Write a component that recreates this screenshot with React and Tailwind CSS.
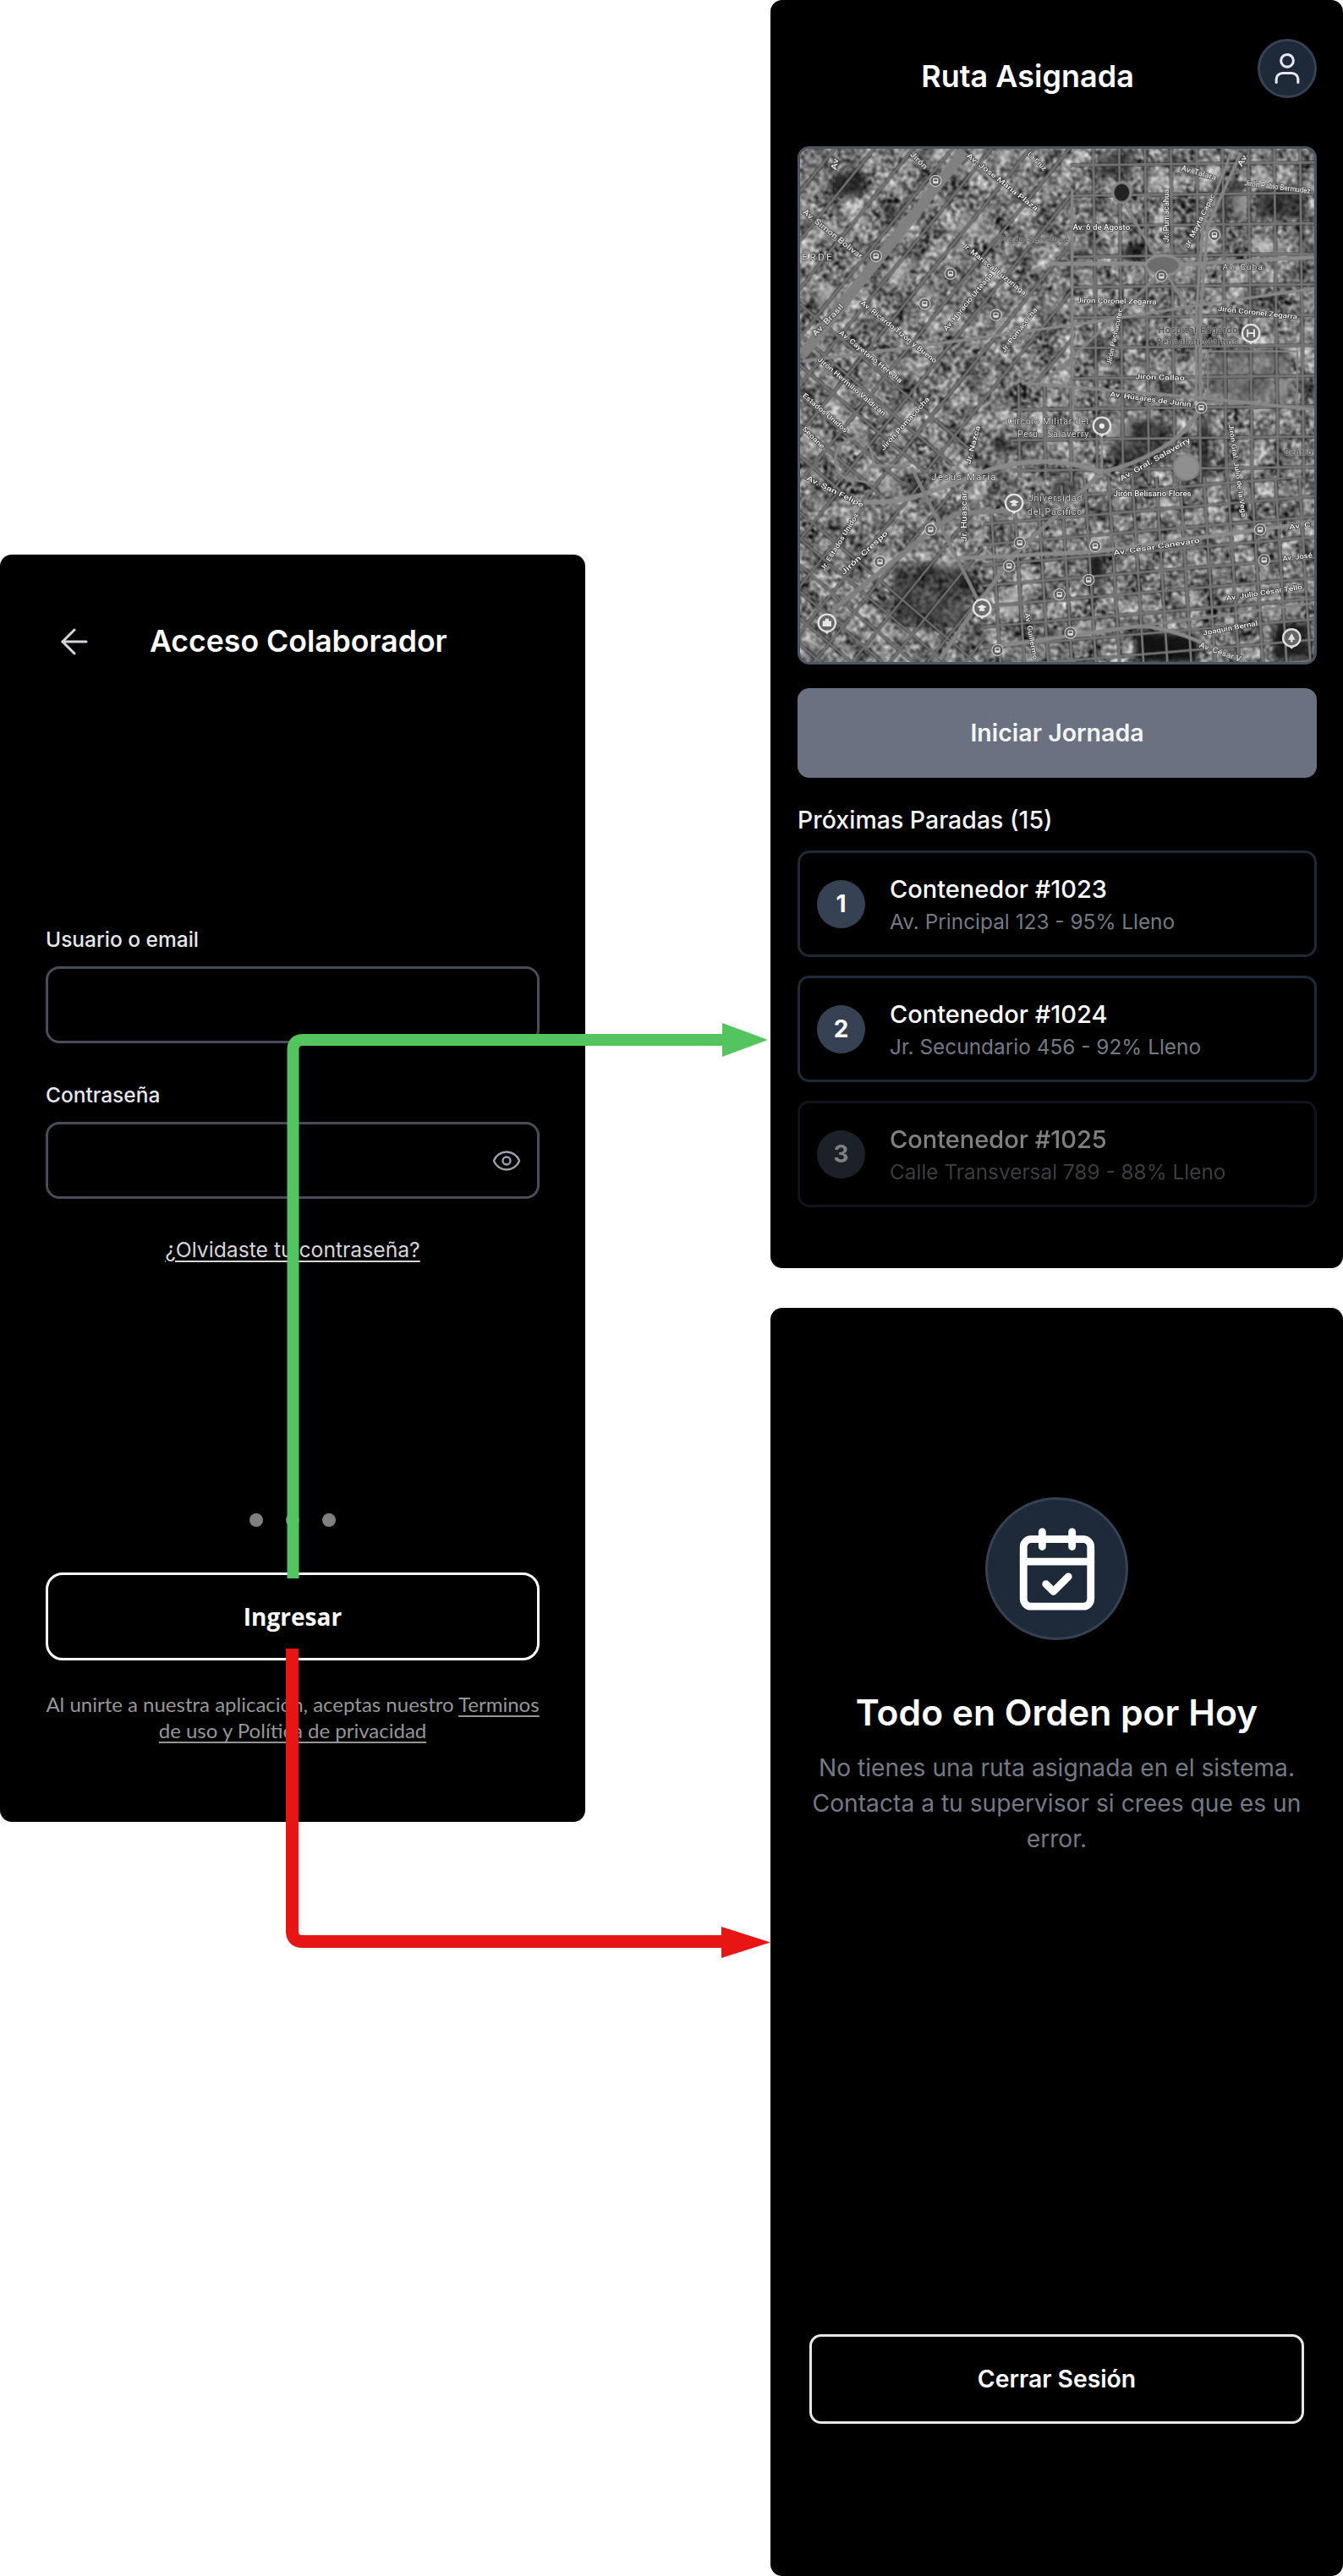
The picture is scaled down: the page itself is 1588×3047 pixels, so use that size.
import { ArrowLeft, CalendarCheck, Eye, User } from 'lucide-react';

const stops = [
  { id: 1, name: 'Contenedor #1023', detail: 'Av. Principal 123 - 95% Lleno' },
  { id: 2, name: 'Contenedor #1024', detail: 'Jr. Secundario 456 - 92% Lleno' },
  { id: 3, name: 'Contenedor #1025', detail: 'Calle Transversal 789 - 88% Lleno', faded: true },
];

// Calles del mapa, en coordenadas del recorte (1568 unidades de lado)
function family(x0, y0, dx, dy, stepX, stepY, count, len = 2400) {
  let d = '';
  for (let i = 0; i < count; i++) {
    const x = x0 + stepX * i;
    const y = y0 + stepY * i;
    d += `M${x} ${y}L${x + dx * len} ${y + dy * len}`;
  }
  return d;
}

const darkPatches = [
  [110, 80, 90, 70, 0.75], [260, 170, 50, 60, 0.6], [900, 20, 110, 70, 0.5], [950, 830, 170, 130, 0.6],
  [1260, 110, 90, 110, 0.55], [1390, 120, 150, 100, 0.6], [1020, 1470, 190, 90, 0.95], [1440, 1440, 110, 110, 0.85],
  [880, 1235, 45, 80, 0.85], [290, 1260, 220, 190, 0.55], [1215, 830, 30, 180, 0.7], [830, 310, 50, 30, 0.7],
  [985, 300, 60, 40, 0.8], [1100, 700, 40, 60, 0.6], [590, 880, 50, 50, 0.7], [770, 1010, 80, 50, 0.5],
  [20, 1510, 50, 50, 0.5], [1250, 610, 240, 25, 0.6], [1240, 700, 190, 50, 0.35], [880, 590, 40, 60, 0.6],
  [500, 1290, 40, 60, 0.7], [140, 960, 50, 30, 0.3], [345, 990, 40, 60, 0.7],
];

const lightPatches = [
  [495, 205, 70, 60], [270, 345, 70, 50], [945, 835, 60, 50], [1460, 1370, 55, 40], [1320, 140, 45, 60],
  [610, 1330, 60, 90], [240, 990, 70, 60], [60, 420, 60, 60], [1040, 1090, 30, 30], [1390, 280, 50, 50],
];

const roads = [
  ['M505 15L15 630', 32, '#808080'],
  ['M760 355H1060M1150 358L1560 335', 12, '#8a8a8a'],
  ['M1340 20L1240 240L1218 500V770', 10, '#868686'],
  ['M1310 20L1225 240L1205 500V770', 8, '#868686'],
  ['M15 650L400 600L900 530L1215 480L1560 430', 9, '#888888'],
  ['M680 715L1215 760L1560 795', 10, '#888888'],
  ['M1215 790C1180 880 1060 950 920 985L650 1240L520 1420L430 1550', 13, '#848484'],
  ['M200 1075C330 1080 380 1050 500 1010C620 950 780 930 920 985', 14, '#8a8a8a'],
  ['M480 1245L900 1225L1568 1135', 12, '#8a8a8a'],
  ['M600 1510L1030 1450C1130 1450 1250 1510 1370 1568', 12, '#888888'],
  ['M1030 1450L1560 1380', 8, '#828282'],
  ['M110 1400L400 1165L480 1110L640 1100', 15, '#808080'],
  ['M345 970L545 1370', 11, '#808080'],
  ['M230 960C230 890 180 870 150 890C100 920 110 980 140 1000L230 1020', 8, '#868686'],
  ['M230 965H340', 8, '#868686'],
  ['M830 130V700M985 170L1100 360L1220 560', 9, '#848484'],
  ['M1090 390L850 620L760 700', 9, '#828282'],
  ['M820 700C840 720 835 790 830 800', 8, '#828282'],
  ['M920 870V985', 6, '#8c8c8c'],
  ['M1240 620H1510V790M1240 620V770', 6, '#828282'],
];

const labels = [
  ['Av. Brasil', 50, 570, 135, 480],
  ['Av. Simon Bolivar', 20, 195, 195, 335],
  ['Av. Jose Maria Plaza', 515, 25, 725, 190],
  ['Jr. Mariscal Luzuriaga', 500, 295, 690, 445],
  ['Av. Horacio Urteaga', 445, 555, 585, 385],
  ['Jr. Pumacahua', 1115, 290, 1115, 130],
  ['Jr. Mayta Capac', 1175, 305, 1255, 145],
  ['Av. Talara', 1160, 65, 1265, 95],
  ['Jirón Pablo Bermudez', 1350, 110, 1550, 135],
  ['Av. 6 de Agosto', 832, 245, 1005, 245],
  ['Jirón Coronel Zegarra', 845, 465, 1085, 470],
  ['Jirón Coronel Zegarra', 1270, 490, 1510, 515],
  ['Av. Ricardo Tizón y Bueno', 195, 470, 420, 650],
  ['Av. Cayetano Heredia', 130, 560, 315, 710],
  ['Jirón Hermilio Valdizan', 65, 640, 265, 810],
  ['Estados Unidos', 20, 750, 150, 860],
  ['Seoane', 20, 850, 80, 910],
  ['Jirón Pachacutec', 940, 660, 975, 490],
  ['Jr. Pomacocha', 620, 620, 720, 490],
  ['Jirón Callao', 1020, 695, 1170, 700],
  ['Av. Húsares de Junín', 945, 748, 1190, 780],
  ['Av. Gral. Salaverry', 975, 1005, 1185, 885],
  ['Av. San Felipe', 30, 1000, 200, 1085],
  ['Jirón Belisario Flores', 955, 1050, 1190, 1050],
  ['Jr. Huascar', 505, 1195, 505, 1045],
  ['Jr. Nazca', 515, 960, 545, 845],
  ['Jirón Pomacocha', 255, 915, 395, 760],
  ['Av. César Canevaro', 955, 1228, 1215, 1190],
  ['Av. Julio César Tello', 1295, 1365, 1525, 1330],
  ['Jirón Gral. Julio de la Vega', 1310, 840, 1350, 1120],
  ['Av. C', 1485, 1150, 1550, 1142],
  ['Av. José', 1465, 1245, 1555, 1235],
  ['Joaquín Bernal', 1225, 1470, 1390, 1440],
  ['Av. César V', 1215, 1505, 1340, 1550],
  ['Av. Guillermo', 695, 1410, 720, 1550],
  ['Jr. Estados Unidos', 75, 1280, 180, 1110],
  ['Jirón Crespo', 135, 1290, 270, 1165],
  ['Av.', 110, 72, 118, 30],
  ['Jirón', 345, 20, 390, 65],
  ['La Cruz', 700, 20, 750, 70],
  ['Av.', 1335, 60, 1355, 22],
];

const bigLabels = [
  ['ERDE', 15, 345, 90, 30, '#d8d8d8'],
  ['Jesús María', 405, 1010, 195, 29, '#dddddd'],
  ['Av. Cuba', 1285, 373, 120, 25, '#e0e0e0'],
  ['Plaza San José', 610, 288, 210, 25, '#4e4e4e'],
  ['Hospital Edgardo', 1090, 565, 240, 27, '#4a4a4a'],
  ['Rebagliati Martins', 1085, 600, 245, 27, '#4a4a4a'],
  ['Círculo Militar del', 635, 840, 245, 27, '#d0d0d0'],
  ['Perú - Salaverry', 665, 880, 215, 27, '#d0d0d0'],
  ['Universidad', 695, 1073, 165, 27, '#cfcfcf'],
  ['del Pacífico', 695, 1113, 165, 27, '#cfcfcf'],
  ['Centro', 1470, 933, 85, 25, '#4a4a4a'],
];

const transit = [
  [418, 105], [238, 332], [463, 385], [385, 476], [600, 510], [1260, 268], [1100, 392], [1220, 790], [403, 1158],
  [250, 1255], [672, 1198], [640, 1268], [900, 1208], [880, 1310], [792, 1354], [825, 1470], [605, 1522], [1398, 1158],
  [1410, 1250],
];

const pins = [
  [920, 845, 'dot'], [655, 1078, 'uni'], [558, 1395, 'uni'], [90, 1440, 'bag'], [1370, 565, 'H'], [1493, 1485, 'tree'],
];

function Streets({ clip, d, color, width }) {
  return (
    <g clipPath={clip}>
      <path d={d} stroke="#222222" strokeWidth={width + 7} opacity="0.4" />
      <path d={d} stroke={color} strokeWidth={width} />
    </g>
  );
}

function CityMap() {
  return (
    <svg viewBox="10 8 1550 1550" className="block w-full h-full" style={{ fontFamily: 'Roboto, sans-serif' }}>
      <defs>
        <filter id="grano" x="0" y="0" width="100%" height="100%" colorInterpolationFilters="sRGB">
          <feTurbulence type="fractalNoise" baseFrequency="0.075" numOctaves="3" seed="7" result="fino" />
          <feTurbulence type="fractalNoise" baseFrequency="0.014" numOctaves="2" seed="21" result="ancho" />
          <feComposite in="fino" in2="ancho" operator="arithmetic" k1="0" k2="0.8" k3="0.55" k4="-0.14" />
          <feColorMatrix type="matrix" values="1.4 0 0 0 -0.02  1.4 0 0 0 -0.02  1.4 0 0 0 -0.02  0 0 0 0 1" />
          <feGaussianBlur stdDeviation="2.2" />
        </filter>
        <filter id="suave"><feGaussianBlur stdDeviation="1.2" /></filter>
        <filter id="sombra"><feGaussianBlur stdDeviation="9" /></filter>
        <clipPath id="zona-diagonal">
          <path d="M0 0H840V720H650L500 960L340 1000L200 1070L0 1000Z" />
        </clipPath>
        <clipPath id="zona-recta">
          <path d="M825 0H1568V1020H880L650 1000L650 720H825Z" />
        </clipPath>
        <clipPath id="zona-baja">
          <path d="M560 1568V1100L880 1000L1568 1000V1568Z" />
        </clipPath>
        <clipPath id="zona-suroeste">
          <path d="M0 1000L200 1070L340 1000L500 960L560 1100V1568H0Z" />
        </clipPath>
      </defs>
      <rect x="0" y="0" width="1568" height="1568" filter="url(#grano)" />
      <g filter="url(#sombra)">
        {darkPatches.map(([x, y, w, h, o], i) => (
          <rect key={i} x={x} y={y} width={w} height={h} rx="12" fill="#111111" opacity={o} />
        ))}
        {lightPatches.map(([x, y, w, h], i) => (
          <rect key={i} x={x} y={y} width={w} height={h} rx="8" fill="#c8c8c8" opacity="0.5" />
        ))}
        <rect x="1250" y="630" width="240" height="150" fill="#777777" opacity="0.6" />
      </g>
      <g filter="url(#suave)" fill="none">
        <Streets
          clip="url(#zona-diagonal)"
          color="#707070"
          width={7}
          d={family(-900, -300, 0.76, 0.65, 0, 92, 26) + family(120, 0, -0.63, 0.78, 118, 0, 14)}
        />
        <Streets
          clip="url(#zona-recta)"
          color="#747474"
          width={7}
          d={family(650, 60, 1, -0.012, 0, 92, 11) + family(660, 0, 0.012, 1, 78, 0, 12)}
        />
        <Streets
          clip="url(#zona-baja)"
          color="#747474"
          width={7}
          d={family(560, 1080, 1, -0.085, 0, 62, 10) + family(580, 1000, 0.06, 1, 72, 0, 14)}
        />
        <Streets
          clip="url(#zona-suroeste)"
          color="#707070"
          width={6}
          d={family(-700, 500, 0.76, 0.65, 0, 80, 16) + family(200, 950, -0.63, 0.78, 90, 30, 9)}
        />
        {roads.map(([d, w, c], i) => (
          <path key={i} d={d} stroke={c} strokeWidth={w} strokeLinejoin="round" />
        ))}
        <ellipse cx="980" cy="140" rx="27" ry="30" fill="#222222" stroke="#848484" strokeWidth="8" />
        <ellipse cx="1105" cy="360" rx="52" ry="30" fill="#6d6d6d" stroke="#8c8c8c" strokeWidth="9" />
        <circle cx="1175" cy="970" r="38" fill="#8f8f8f" stroke="#848484" strokeWidth="6" />
      </g>
      <g filter="url(#suave)" opacity="0.95">
        {transit.map(([x, y], i) => (
          <g key={i}>
            <circle cx={x} cy={y} r="17" fill="#5e5e5e" stroke="#c9c9c9" strokeWidth="3" />
            <rect x={x - 8} y={y - 8} width="16" height="16" rx="3" fill="#e3e3e3" />
            <rect x={x - 5} y={y - 5} width="10" height="6" fill="#5e5e5e" />
          </g>
        ))}
        {pins.map(([x, y, kind], i) => (
          <g key={i}>
            <path d={`M${x - 21} ${y + 14}L${x} ${y + 34}L${x + 21} ${y + 14}Z`} fill="#e8e8e8" />
            <circle cx={x} cy={y} r="26" fill="#6b6b6b" stroke="#e6e6e6" strokeWidth="6" />
            {kind === 'dot' && <circle cx={x} cy={y} r="8" fill="#f2f2f2" />}
            {kind === 'uni' && <path d={`M${x - 15} ${y - 3}L${x} ${y - 10}L${x + 15} ${y - 3}L${x} ${y + 4}ZM${x - 8} ${y + 3}H${x + 8}V${y + 9}H${x - 8}Z`} fill="#eeeeee" />}
            {kind === 'bag' && <path d={`M${x - 13} ${y - 6}H${x + 13}V${y + 11}H${x - 13}ZM${x - 5} ${y - 13}H${x + 5}V${y - 6}H${x - 5}Z`} fill="#eeeeee" />}
            {kind === 'tree' && <path d={`M${x} ${y - 13}L${x + 11} ${y + 6}H${x + 3}V${y + 13}H${x - 3}V${y + 6}H${x - 11}Z`} fill="#eeeeee" />}
            {kind === 'H' && <path d={`M${x - 10} ${y - 12}V${y + 12}M${x + 10} ${y - 12}V${y + 12}M${x - 10} ${y}H${x + 10}`} stroke="#eeeeee" strokeWidth="5" />}
          </g>
        ))}
      </g>
      <g>
        {labels.map(([t, x1, y1, x2, y2], i) => {
          const angle = (Math.atan2(y2 - y1, x2 - x1) * 180) / Math.PI;
          const len = Math.hypot(x2 - x1, y2 - y1);
          return (
            <text
              key={i}
              transform={`translate(${(x1 + x2) / 2} ${(y1 + y2) / 2}) rotate(${angle})`}
              textAnchor="middle"
              dominantBaseline="central"
              textLength={len}
              lengthAdjust="spacingAndGlyphs"
              fontSize="21"
              fontWeight="500"
              fill="#f0f0f0"
              stroke="#3c3c3c"
              strokeWidth="3.5"
              paintOrder="stroke"
            >
              {t}
            </text>
          );
        })}
        {bigLabels.map(([t, x, y, len, size, c], i) => (
          <text
            key={i}
            x={x}
            y={y}
            textLength={len}
            lengthAdjust="spacing"
            fontSize={size}
            fill={c}
            stroke={c === '#4e4e4e' || c === '#4a4a4a' ? '#9a9a9a' : '#3c3c3c'}
            strokeWidth="3"
            paintOrder="stroke"
          >
            {t}
          </text>
        ))}
      </g>
    </svg>
  );
}

function LoginPanel() {
  return (
    <section className="w-[692px] h-[1499px] mt-[656px] bg-black rounded-[14px] px-[54px] flex flex-col font-['Inter',sans-serif]">
      <header className="flex items-center h-[54px] mt-[76px] gap-[65px] pl-[10px]">
        <ArrowLeft size={48} strokeWidth={1.5} className="text-gray-300" />
        <h1 className="text-[35.6px] leading-[54px] font-semibold text-white">Acceso Colaborador</h1>
      </header>

      <label className="mt-[307px] text-[24.5px] leading-[36px] font-medium text-gray-200">Usuario o email</label>
      <div className="mt-[14px] h-[91px] rounded-[16px] border-[3px] border-[#464e5b]" />

      <label className="mt-[43px] text-[24.5px] leading-[36px] font-medium text-gray-200">Contraseña</label>
      <div className="mt-[14px] h-[91px] rounded-[16px] border-[3px] border-[#464e5b] flex items-center justify-end pr-[18px]">
        <Eye size={36} strokeWidth={1.6} className="text-gray-400" />
      </div>

      <a className="mt-[42px] self-center text-[24.7px] leading-[36px] text-[#d6d6d6] underline underline-offset-4">¿Olvidaste tu contraseña?</a>

      <div className="mt-[294px] flex justify-center gap-[27px]">
        <span className="w-[16px] h-[16px] rounded-full bg-[#808080]" />
        <span className="w-[16px] h-[16px] rounded-full bg-[#808080]" />
        <span className="w-[16px] h-[16px] rounded-full bg-[#808080]" />
      </div>

      <button className="mt-[54px] h-[104px] rounded-[20px] border-[3px] border-white text-[28px] font-bold text-white font-['Open_Sans',sans-serif]">
        Ingresar
      </button>

      <p className="mt-[36px] -mx-[4px] text-center text-[24px] leading-[31px] text-[#969696] font-['Lato',sans-serif]">
        <span>Al unirte a nuestra aplicación, aceptas nuestro </span>
        <a className="underline underline-offset-4">Terminos</a>
        <br />
        <a className="underline underline-offset-4">de uso y Política de privacidad</a>
      </p>
    </section>
  );
}

function RoutePanel() {
  return (
    <section className="h-[1500px] bg-black rounded-[14px] pl-[32px] pr-[31px] flex flex-col font-['Inter',sans-serif]">
      <header className="mt-[46px] h-[70px] flex items-center">
        <h2 className="flex-1 pt-[18px] text-center text-[36px] leading-[52px] font-semibold text-white">Ruta Asignada</h2>
        <div className="w-[70px] h-[70px] rounded-full bg-gray-800 border-[3px] border-gray-700 flex items-center justify-center">
          <User size={44} strokeWidth={1.7} className="text-gray-200" />
        </div>
      </header>

      <div className="mt-[57px] w-full h-[613px] rounded-[14px] border-[3px] border-gray-600 overflow-hidden bg-gray-500">
        <CityMap />
      </div>

      <button className="mt-[28px] h-[106px] rounded-[14px] bg-gray-500 text-[28.5px] font-semibold text-gray-100">
        Iniciar Jornada
      </button>

      <h3 className="mt-[32px] text-[28.5px] leading-[36px] font-medium text-gray-100">Próximas Paradas (15)</h3>

      <div className="mt-[18px] flex flex-col gap-[22px]">
        {stops.map((stop) => (
          <div key={stop.id} className={`h-[126px] rounded-[14px] border-[3px] border-gray-800 px-[20px] flex items-center gap-[29px] ${stop.faded ? 'opacity-50' : ''}`}>
            <div className="w-[57px] h-[57px] rounded-full bg-gray-700 flex items-center justify-center text-[28px] font-bold text-white">
              {stop.id}
            </div>
            <div className="pt-[3px]">
              <p className="text-[29px] leading-[38px] font-medium text-white">{stop.name}</p>
              <p className="text-[24.4px] leading-[38px] text-[#747a85]">{stop.detail}</p>
            </div>
          </div>
        ))}
      </div>
    </section>
  );
}

function EmptyPanel() {
  return (
    <section className="h-[1500px] bg-black rounded-[14px] px-[46px] pb-[180px] flex flex-col items-center font-['Inter',sans-serif]">
      <div className="mt-[224px] w-[169px] h-[169px] rounded-full bg-gray-800 border-[3px] border-gray-700 flex items-center justify-center">
        <CalendarCheck size={106} className="text-white" />
      </div>
      <h2 className="mt-[58px] text-[42.6px] leading-[56px] font-semibold text-white">Todo en Orden por Hoy</h2>
      <p className="mt-[16px] text-center text-[28.2px] leading-[42px] text-[#747a85]">
        No tienes una ruta asignada en el sistema. Contacta a tu supervisor si crees que es un error.
      </p>
      <button className="mt-auto w-full h-[106px] rounded-[14px] border-[3px] border-gray-200 text-[28.3px] font-semibold text-white">
        Cerrar Sesión
      </button>
    </section>
  );
}

function FlowArrows() {
  return (
    <svg viewBox="0 0 1588 3047" className="absolute inset-0 w-full h-full pointer-events-none">
      <path d="M346.5 1867V1242Q346.5 1230 358.5 1230H856" fill="none" stroke="#54c45f" strokeWidth="14" />
      <path d="M854 1210L908 1230L854 1250Z" fill="#54c45f" />
      <path d="M345.5 1950V2284Q345.5 2296.5 358 2296.5H856" fill="none" stroke="#e81515" strokeWidth="15" />
      <path d="M853 2279L911 2297.5L853 2316Z" fill="#e81515" />
    </svg>
  );
}

export default function App() {
  return (
    <div className="relative w-[1588px] h-[3047px] bg-white overflow-hidden flex justify-between items-start">
      <LoginPanel />
      <div className="w-[677px] flex flex-col gap-[47px]">
        <RoutePanel />
        <EmptyPanel />
      </div>
      <FlowArrows />
    </div>
  );
}
